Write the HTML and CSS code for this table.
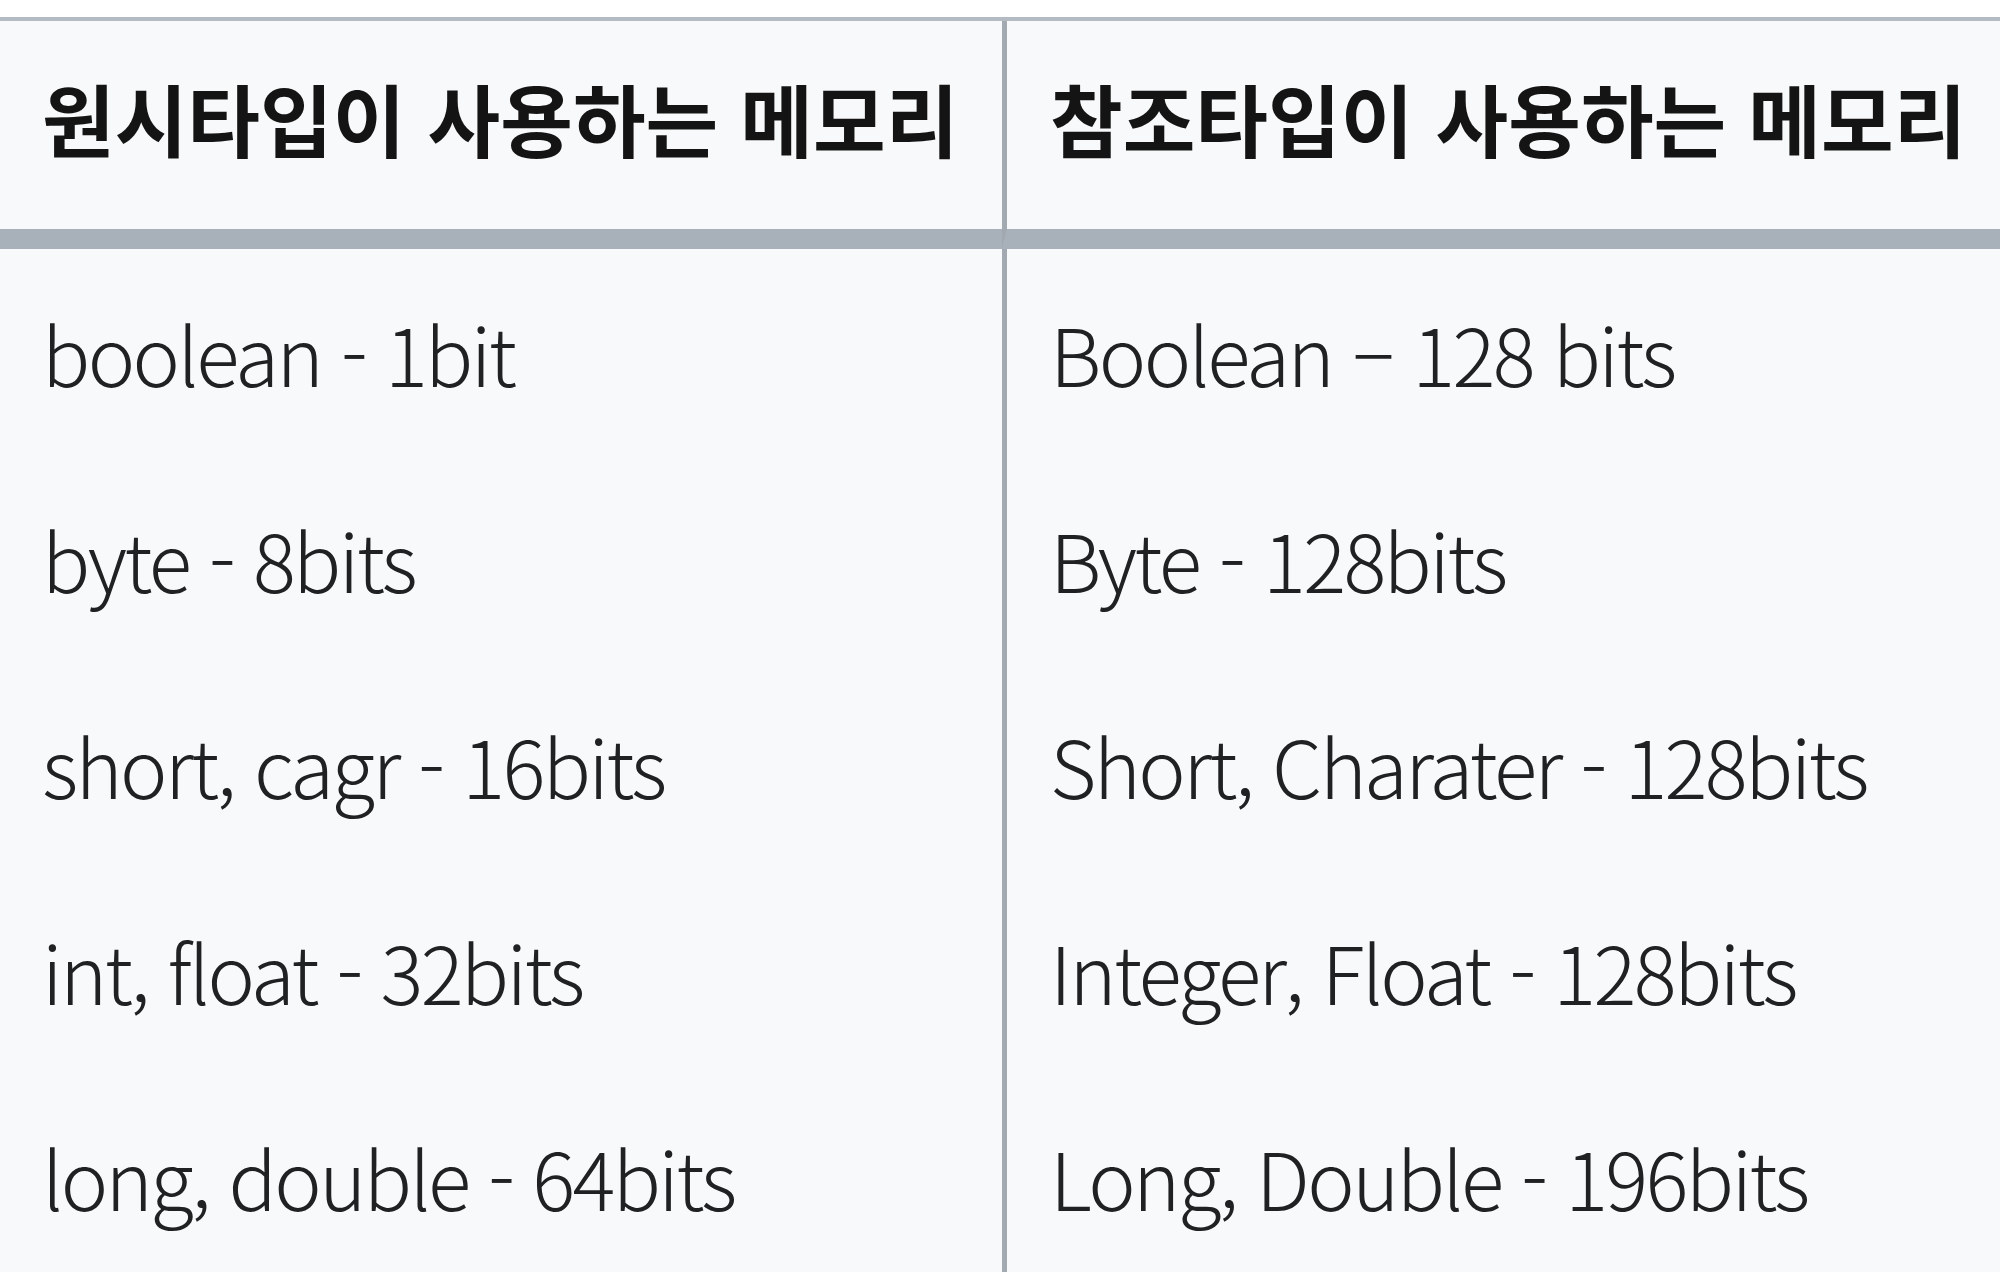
FILE: index.html
```html
<!DOCTYPE html>
<html lang="ko">
<head>
<meta charset="utf-8">
<title>원시타입 vs 참조타입 메모리</title>
<link rel="stylesheet" href="styles.css">
</head>
<body>
<div class="wrap">
  <table class="mem">
    <colgroup>
      <col class="c1">
      <col class="c2">
    </colgroup>
    <thead>
      <tr>
        <th>원시타입이 사용하는 메모리</th>
        <th>참조타입이 사용하는 메모리</th>
      </tr>
    </thead>
    <tbody>
      <tr><td>boolean - 1bit</td><td>Boolean – 128 bits</td></tr>
      <tr><td>byte - 8bits</td><td>Byte - 128bits</td></tr>
      <tr><td>short, cagr - 16bits</td><td>Short, Charater - 128bits</td></tr>
      <tr><td>int, float - 32bits</td><td>Integer, Float - 128bits</td></tr>
      <tr><td>long, double - 64bits</td><td>Long, Double - 196bits</td></tr>
    </tbody>
  </table>
</div>
</body>
</html>
```

FILE: styles.css
```css
html, body {
  margin: 0;
  padding: 0;
  background: #ffffff;
  overflow: hidden;
}

.wrap {
  padding-top: 17px;
}

.mem {
  border-collapse: separate;
  border-spacing: 0;
  table-layout: fixed;
  width: 2000px;
  background: #f8f9fa;
  border-top: 4px solid #b3bac1;
  color: #202122;
  font-family: "Noto Sans CJK KR", "Noto Sans", sans-serif;
}

.mem .c1 {
  width: 1002px;
}

.mem th,
.mem td {
  box-sizing: border-box;
  padding: 0 0 0 42px;
  text-align: left;
  vertical-align: middle;
  white-space: nowrap;
  line-height: 1.2;
}

.mem th {
  height: 228px;
  padding-bottom: 14px;
  font-size: 79px;
  font-weight: 700;
  color: #141414;
  border-bottom: 20px solid #a8b0b9;
}

.mem td {
  height: 206px;
  font-size: 80px;
  font-weight: 300;
  letter-spacing: -2.6px;
}

.mem th + th,
.mem td + td {
  border-left: 5px solid #a2a9b1;
  padding-left: 43px;
}
```
